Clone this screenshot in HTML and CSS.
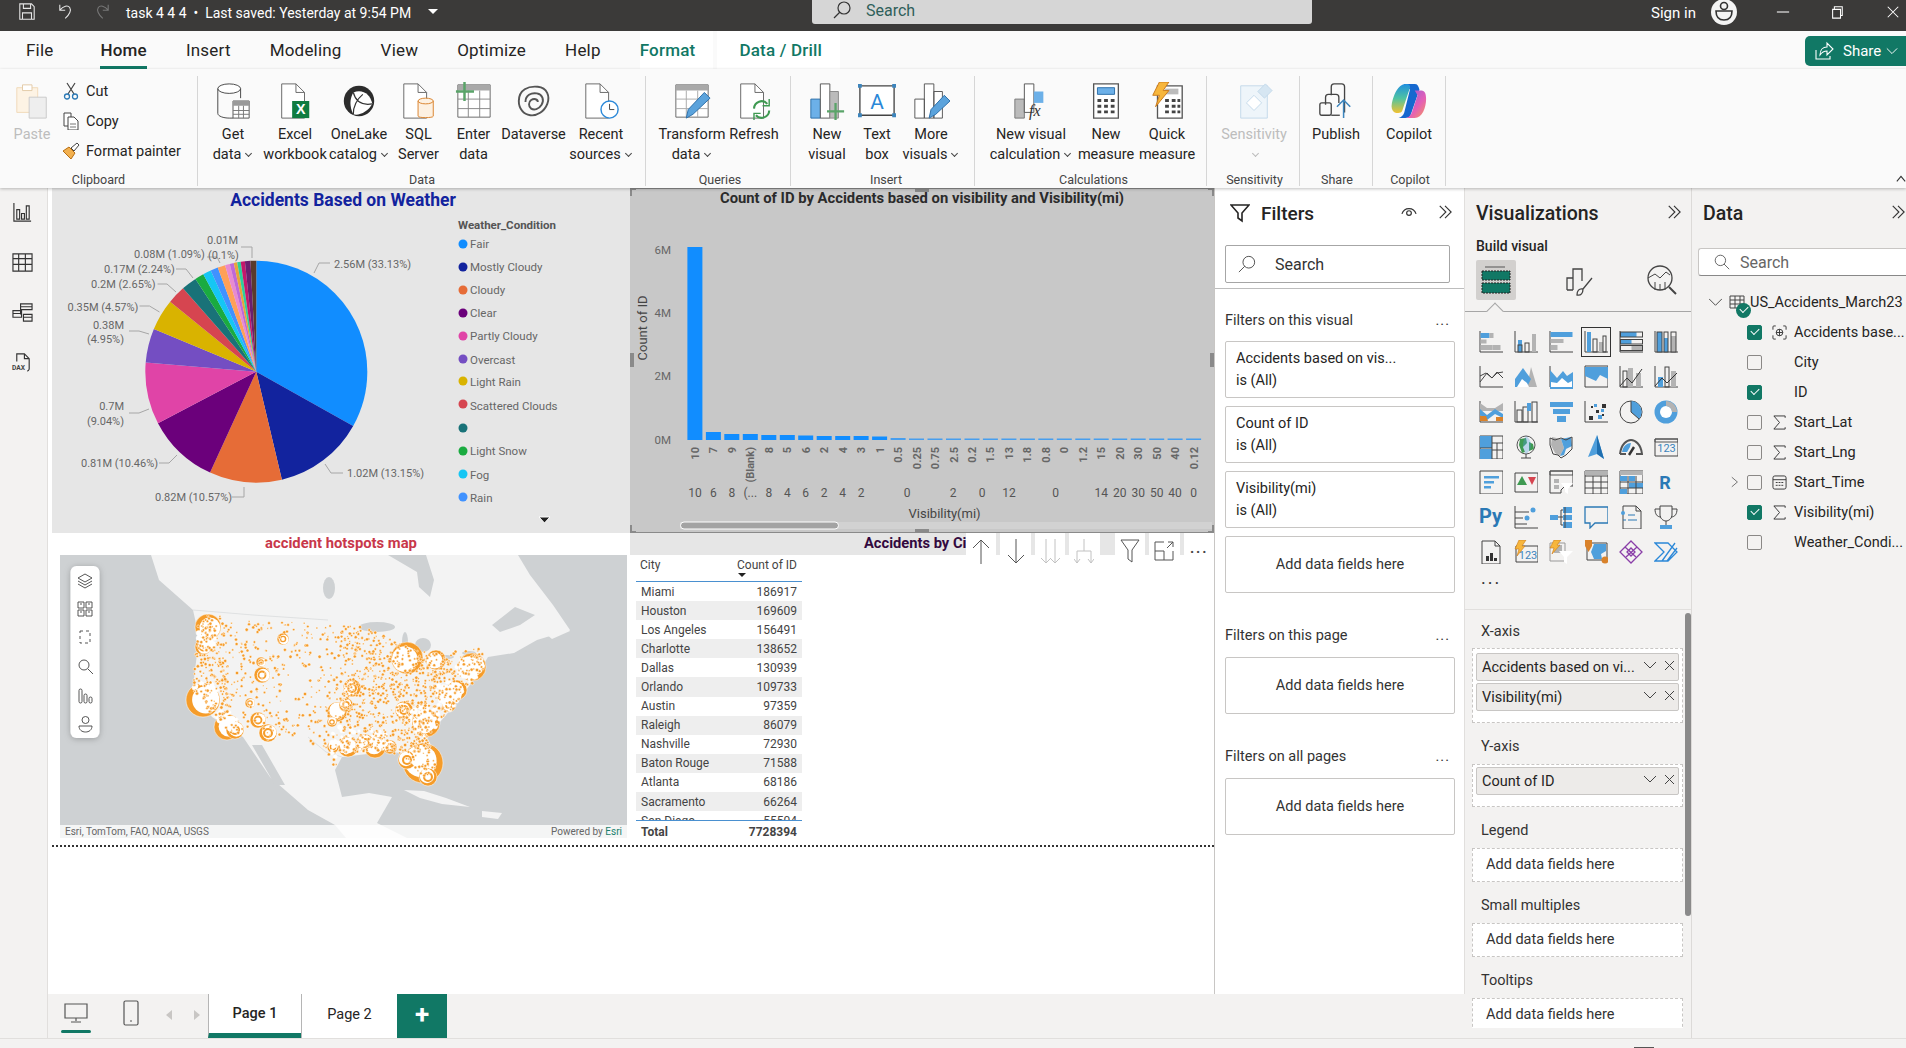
FILE: index.html
```html
<!DOCTYPE html>
<html lang="en">
<head>
    <meta charset="UTF-8">
    <title>task 4 4 4 - Power BI Desktop</title>
    <link rel="stylesheet" href="styles.css">
</head>
<body>
<div class="app">

    <!-- title bar -->
    <div class="titlebar">
        <svg class="tb-ico tb-save" viewBox="0 0 20 20"><path d="M2 1h13l3 3v14H2zM6 1v5h8V1M5 18v-7h10v7"/></svg>
        <svg class="tb-ico tb-undo" viewBox="0 0 20 20"><path d="M2 2v6h6M2 8c4-5 9-6 11-3s0 8-5 12"/></svg>
        <svg class="tb-ico tb-redo" viewBox="0 0 20 20"><path d="M18 2v6h-6M18 8c-4-5-9-6-11-3s0 8 5 12"/></svg>
        <span class="tb-file">task 4 4 4 &nbsp;•&nbsp; Last saved: Yesterday at 9:54 PM</span>
        <span class="tb-caret"></span>
        <div class="tb-search">
            <svg viewBox="0 0 20 20"><circle cx="12" cy="8" r="6"/><path d="M8 12l-6 6"/></svg>
            <span>Search</span>
        </div>
        <span class="tb-sign">Sign in</span>
        <svg class="tb-avatar" viewBox="0 0 26 26"><circle cx="13" cy="13" r="13" fill="#f4f4f4"/><circle cx="13" cy="7" r="3.5" fill="none" stroke="#333" stroke-width="1.6"/><path d="M5 12h16c0 6-3 9-8 9s-8-3-8-9z" fill="none" stroke="#333" stroke-width="1.6"/></svg>
        <svg class="tb-win tb-min" viewBox="0 0 16 16"><path d="M1 8h14"/></svg>
        <svg class="tb-win tb-res" viewBox="0 0 16 16"><path d="M3 5h9v10H3zM5 5V2h9v10h-2"/></svg>
        <svg class="tb-win tb-close" viewBox="0 0 16 16"><path d="M2 2l12 12M14 2L2 14"/></svg>
    </div>

    <!-- tabs -->
    <div class="tabs">
        <span class="tab tab-file">File</span>
        <span class="tab active">Home</span>
        <span class="tab">Insert</span>
        <span class="tab">Modeling</span>
        <span class="tab">View</span>
        <span class="tab">Optimize</span>
        <span class="tab">Help</span>
        <span class="tab ctx">Format</span>
        <span class="tab ctx">Data / Drill</span>
        <button class="share">
            <svg viewBox="0 0 20 20"><path d="M2 9v9h14v-3M6 14c0-5 3-8 7-8V2l6 6-6 6v-4c-3 0-5 1-7 4z"/></svg>
            Share
            <svg class="share-chev" viewBox="0 0 14 14"><path d="M1 4l6 6 6-6"/></svg>
        </button>
    </div>

    <!-- ribbon -->
    <div class="ribbon">
        <div class="rgroup g-clip">
            <div class="rbtns">
                <div class="rbtn dim paste">
                    <svg class="ric" viewBox="0 0 40 40"><path d="M4 6h22v26H4z" fill="#fdf3e4" stroke="#f0d9b8"/><path d="M10 3h10v6H10z" fill="#fff" stroke="#e3c9a6"/><path d="M17 16h18v22H17z" fill="#eee" stroke="#c9c9c9"/></svg>
                    <span>Paste</span>
                </div>
                <div class="clip-col">
                    <div class="clip-row"><svg viewBox="0 0 18 18"><path d="M5 1l7 11M13 1L6 12" fill="none" stroke="#444" stroke-width="1.2"/><circle cx="5" cy="14.500" r="2.500" fill="none" stroke="#2b79b5" stroke-width="1.3"/><circle cx="13" cy="14.500" r="2.500" fill="none" stroke="#2b79b5" stroke-width="1.3"/></svg>Cut</div>
                    <div class="clip-row"><svg viewBox="0 0 18 18"><path d="M2 1h7v13H2z" fill="#fff" stroke="#444"/><path d="M6 5h6l4 4v9H6z" fill="#fff" stroke="#444"/><path d="M8 12h6M8 15h6" stroke="#777"/></svg>Copy</div>
                    <div class="clip-row"><svg viewBox="0 0 18 18"><path d="M1 9l8 8 4-6-6-6z" fill="#f2b04f" stroke="#b76e12"/><path d="M9 6l6-5 2 2-5 6z" fill="#fff" stroke="#444"/></svg>Format painter</div>
                </div>
            </div>
            <div class="rlabel">Clipboard</div>
        </div>

        <div class="rgroup g-data">
            <div class="rbtns">
                <div class="rbtn w60">
                    <svg class="ric" viewBox="0 0 40 40"><ellipse cx="16" cy="7" rx="12" ry="5" fill="#fff" stroke="#444"/><path d="M4 7v26c0 3 6 5 12 5h4M28 7v10" fill="none" stroke="#444"/><path d="M20 20h17v18H20z" fill="#fff" stroke="#555"/><path d="M20 20h17v5H20z" fill="#9a9a9a"/><path d="M26 25v13M31 25v13M20 30h17M20 34h17" stroke="#777"/></svg>
                    <span>Get<br>data<i class="chev"></i></span>
                </div>
                <div class="rbtn w64">
                    <svg class="ric" viewBox="0 0 40 40"><path d="M6 2h15l9 9v27H6z" fill="#fff" stroke="#666"/><path d="M21 2v9h9" fill="none" stroke="#666"/><rect x="17" y="20" width="18" height="18" fill="#107c41"/><text x="26" y="34" class="xl">X</text></svg>
                    <span>Excel<br>workbook</span>
                </div>
                <div class="rbtn w64">
                    <svg class="ric" viewBox="0 0 40 40"><circle cx="20" cy="20" r="16" fill="#2c2c2c"/><path d="M14 11c10-4 18 2 20 12-4 8-14 13-20 11-4-8-4-16 0-23z" fill="#fff"/><path d="M14 11c2 8 8 14 20 12M14 34c0-8 4-16 10-21" fill="none" stroke="#333" stroke-width="1.3"/></svg>
                    <span>OneLake<br>catalog<i class="chev"></i></span>
                </div>
                <div class="rbtn w55">
                    <svg class="ric" viewBox="0 0 40 40"><path d="M4 2h15l9 9v27H4z" fill="#fff" stroke="#666"/><path d="M19 2v9h9" fill="none" stroke="#666"/><path d="M19 20v16c0 2 16 2 16 0V20" fill="#fdf1e2" stroke="#d9822b"/><ellipse cx="27" cy="20" rx="8" ry="3" fill="#fdf1e2" stroke="#d9822b"/></svg>
                    <span>SQL<br>Server</span>
                </div>
                <div class="rbtn w55">
                    <svg class="ric" viewBox="0 0 40 40"><path d="M3 3h34v34H3z" fill="#fff" stroke="#666"/><path d="M3 3h34v6H3z" fill="#a9a9a9"/><path d="M14 9v28M26 9v28M3 18h34M3 28h34" stroke="#888"/><path d="M10 0v20M1 10h19" stroke="#5aa469" stroke-width="2.600"/></svg>
                    <span>Enter<br>data</span>
                </div>
                <div class="rbtn w65">
                    <svg class="ric" viewBox="0 0 40 40"><path d="M4 20C4 8 14 4 24 5c10 1 13 10 10 18s-11 13-18 12C9 34 4 28 4 20z" fill="none" stroke="#555" stroke-width="2"/><path d="M11 21c0-7 6-10 12-9s8 7 5 12-8 6-11 4-3-7 0-9 7-1 7 2" fill="none" stroke="#555" stroke-width="2"/></svg>
                    <span>Dataverse</span>
                </div>
                <div class="rbtn w70">
                    <svg class="ric" viewBox="0 0 40 40"><path d="M4 2h15l9 9v27H4z" fill="#fff" stroke="#666"/><path d="M19 2v9h9" fill="none" stroke="#666"/><circle cx="29" cy="29" r="9" fill="#fff" stroke="#2b88d8" stroke-width="1.500"/><path d="M29 23v6h5" fill="none" stroke="#444"/></svg>
                    <span>Recent<br>sources<i class="chev"></i></span>
                </div>
            </div>
            <div class="rlabel">Data</div>
        </div>

        <div class="rgroup g-query">
            <div class="rbtns">
                <div class="rbtn w76">
                    <svg class="ric" viewBox="0 0 40 40"><path d="M3 3h34v34H3z" fill="#fff" stroke="#666"/><path d="M3 3h34v6H3z" fill="#a9a9a9"/><path d="M14 9v28M26 9v28M3 18h34M3 28h34" stroke="#aaa"/><path d="M14 38l2-9 17-18 6 6-18 17z" fill="#5ba3dc" stroke="#2b6ea8"/></svg>
                    <span>Transform<br>data<i class="chev"></i></span>
                </div>
                <div class="rbtn w48">
                    <svg class="ric" viewBox="0 0 40 40"><path d="M6 2h15l9 9v27H6z" fill="#fff" stroke="#666"/><path d="M21 2v9h9" fill="none" stroke="#666"/><path d="M20 28a8 8 0 0 1 14-5M36 30a8 8 0 0 1-14 5" fill="none" stroke="#3f9a52" stroke-width="2.200"/><path d="M36 18v7h-7M20 40v-7h7" fill="none" stroke="#3f9a52" stroke-width="1.500"/></svg>
                    <span>Refresh</span>
                </div>
            </div>
            <div class="rlabel">Queries</div>
        </div>

        <div class="rgroup g-insert">
            <div class="rbtns">
                <div class="rbtn w50">
                    <svg class="ric" viewBox="0 0 40 40"><path d="M3 18h10v20H3z" fill="#6cb0e8" stroke="#2b6ea8"/><path d="M13 2h10v36H13z" fill="#fff" stroke="#555"/><path d="M23 10h9v28h-9z" fill="#bbb" stroke="#888"/><path d="M29 22v18M20 31h18" stroke="#5aa469" stroke-width="2.400"/></svg>
                    <span>New<br>visual</span>
                </div>
                <div class="rbtn w50">
                    <svg class="ric" viewBox="0 0 40 40"><path d="M2 4h36v31H2z" fill="#fff" stroke="#444" stroke-width="1.400"/><text x="20" y="28" class="ta">A</text><path d="M0 2h4v4H0zM36 2h4v4h-4zM0 33h4v4H0zM36 33h4v4h-4z" fill="#3d85bd"/></svg>
                    <span>Text<br>box</span>
                </div>
                <div class="rbtn w58">
                    <svg class="ric" viewBox="0 0 40 40"><path d="M3 18h10v20H3zM13 2h10v36H13zM23 10h9v28h-9z" fill="#fff" stroke="#555"/><path d="M18 38l2-9 14-15 6 6-15 14z" fill="#5ba3dc" stroke="#2b6ea8"/></svg>
                    <span>More<br>visuals<i class="chev"></i></span>
                </div>
            </div>
            <div class="rlabel">Insert</div>
        </div>

        <div class="rgroup g-calc">
            <div class="rbtns">
                <div class="rbtn w92">
                    <svg class="ric" viewBox="0 0 40 40"><path d="M3 18h10v20H3z" fill="#bbb" stroke="#777"/><path d="M13 2h10v30H13z" fill="#fff" stroke="#555"/><path d="M23 10h10v12H23z" fill="#6cb0e8"/><text x="18" y="36" class="fx">fx</text></svg>
                    <span>New visual<br>calculation<i class="chev"></i></span>
                </div>
                <div class="rbtn w58">
                    <svg class="ric" viewBox="0 0 40 40"><path d="M7 2h26v36H7z" fill="#fff" stroke="#555" stroke-width="1.400"/><path d="M11 6h18v7H11z" fill="#6cb0e8" stroke="#2b6ea8"/><path d="M11 18h4v3h-4zM18 18h4v3h-4zM25 18h4v3h-4zM11 24h4v3h-4zM18 24h4v3h-4zM25 24h4v3h-4zM11 30h4v3h-4zM18 30h4v3h-4zM25 30h4v3h-4z" fill="#444"/></svg>
                    <span>New<br>measure</span>
                </div>
                <div class="rbtn w64">
                    <svg class="ric" viewBox="0 0 40 40"><path d="M10 4h26v34H10z" fill="#fff" stroke="#555" stroke-width="1.400"/><path d="M18 7h14v6H18z" fill="#bbb"/><path d="M18 18h4v3h-4zM25 18h4v3h-4zM18 24h4v3h-4zM25 24h4v3h-4zM18 30h4v3h-4zM25 30h4v3h-4zM31 18h3v3h-3zM31 24h3v3h-3zM31 30h3v3h-3z" fill="#444"/><path d="M12 0h10l-6 9h6L8 26l4-12H5z" fill="#f7b63c" stroke="#c9781a"/></svg>
                    <span>Quick<br>measure</span>
                </div>
            </div>
            <div class="rlabel">Calculations</div>
        </div>

        <div class="rgroup g-sens">
            <div class="rbtns">
                <div class="rbtn w80 dim">
                    <svg class="ric" viewBox="0 0 40 40"><path d="M6 4h28v34H6z" fill="#eef5fa" stroke="#c3d9ea"/><path d="M12 22l8-8 8 8-8 8z" fill="#fff" stroke="#c3d9ea"/><path d="M24 10l8-8 7 7-8 8z" fill="#d6e6f2" stroke="#c3d9ea"/></svg>
                    <span>Sensitivity<br><i class="chev"></i></span>
                </div>
            </div>
            <div class="rlabel">Sensitivity</div>
        </div>

        <div class="rgroup g-share">
            <div class="rbtns">
                <div class="rbtn w60">
                    <svg class="ric" viewBox="0 0 40 40"><path d="M15 14V5a3 3 0 0 1 3-3h8a3 3 0 0 1 3 3v27" fill="none" stroke="#444" stroke-width="1.400"/><path d="M9 24v-8a3 3 0 0 1 3-3h8a3 3 0 0 1 3 3v6" fill="none" stroke="#444" stroke-width="1.400"/><rect x="3" y="22" width="12" height="13" rx="2" fill="none" stroke="#444" stroke-width="1.400"/><path d="M15 35h9" stroke="#444" stroke-width="1.400"/><path d="M28 38V19M21 26l7-7 7 7" fill="none" stroke="#3d85bd" stroke-width="1.600"/></svg>
                    <span>Publish</span>
                </div>
            </div>
            <div class="rlabel">Share</div>
        </div>

        <div class="rgroup g-copilot">
            <div class="rbtns">
                <div class="rbtn w60">
                    <svg class="ric" viewBox="0 0 40 40">
                        <defs>
                            <linearGradient id="cpa" x1="0" y1="0" x2="0" y2="1"><stop offset="0" stop-color="#1f8fe0"/><stop offset=".5" stop-color="#4fc3a1"/><stop offset="1" stop-color="#f2c230"/></linearGradient>
                            <linearGradient id="cpb" x1="0" y1="0" x2="1" y2="1"><stop offset="0" stop-color="#8a5ce0"/><stop offset=".6" stop-color="#e45fb6"/><stop offset="1" stop-color="#f59a5a"/></linearGradient>
                        </defs>
                        <path d="M14 2h12c3 0 4 2 5 6l-9 26c-1 3-3 4-6 4H9c3-1 5-3 6-6l6-24z" fill="#1668cf"/>
                        <path d="M13 3c4-2 9-1 8 3l-8 24c-1 3-5 3-8 2-3-2-4-5-3-10 2-8 5-16 11-19z" fill="url(#cpa)"/>
                        <path d="M26 9h7c4 0 5 4 5 9 0 9-4 20-12 20H15c4 0 7-3 8-6l6-18z" fill="url(#cpb)"/>
                    </svg>
                    <span>Copilot</span>
                </div>
            </div>
            <div class="rlabel">Copilot</div>
        </div>
        <svg class="rib-collapse" viewBox="0 0 12 12"><path d="M1 10l5-6 5 6"/></svg>
    </div>

    <div class="main">
        <!-- left rail -->
        <div class="rail">
            <svg viewBox="0 0 22 22"><path d="M2 1v19h18M5 8h3v10H5zM10 12h3v6h-3zM15 4h3v14h-3z"/></svg>
            <svg viewBox="0 0 22 22"><path d="M1 2h20v18H1zM1 7h20M1 13h20M7 2v18M14 2v18"/></svg>
            <svg viewBox="0 0 22 22"><path d="M9 2h12v6H9zM9 8v5M1 9h9v7H1zM12 13h9v7h-9zM1 12h9M12 16h9M9 5h12"/></svg>
            <svg viewBox="0 0 22 22"><path d="M5 10V2h8l5 5v11a3 3 0 0 1-2 2M13 2v5h5"/><text x="0" y="19" class="dax">DAX</text></svg>
        </div>

        <div class="center">
            <div class="center-top">
                <!-- report canvas -->
                <div class="canvas">
                    <div class="report">

                        <!-- pie -->
                        <svg class="visual" viewBox="52 188 578 345">
                            <rect x="52" y="188" width="578" height="345" fill="#e6e6e6"/>
                            <text x="343" y="206" text-anchor="middle" class="v-title" fill="#12239e">Accidents Based on Weather</text>
                            <g class="pie">
                                <circle cx="256.300" cy="371.700" r="55.500" pathLength="100" stroke="#118dff" stroke-dasharray="33.13 100" transform="rotate(-90 256.300 371.700)"/>
                                <circle cx="256.300" cy="371.700" r="55.500" pathLength="100" stroke="#12239e" stroke-dasharray="13.15 100" stroke-dashoffset="-33.13" transform="rotate(-90 256.300 371.700)"/>
                                <circle cx="256.300" cy="371.700" r="55.500" pathLength="100" stroke="#e66c37" stroke-dasharray="10.57 100" stroke-dashoffset="-46.28" transform="rotate(-90 256.300 371.700)"/>
                                <circle cx="256.300" cy="371.700" r="55.500" pathLength="100" stroke="#6b007b" stroke-dasharray="10.46 100" stroke-dashoffset="-56.85" transform="rotate(-90 256.300 371.700)"/>
                                <circle cx="256.300" cy="371.700" r="55.500" pathLength="100" stroke="#e044a7" stroke-dasharray="9.04 100" stroke-dashoffset="-67.31" transform="rotate(-90 256.300 371.700)"/>
                                <circle cx="256.300" cy="371.700" r="55.500" pathLength="100" stroke="#744ec2" stroke-dasharray="4.95 100" stroke-dashoffset="-76.35" transform="rotate(-90 256.300 371.700)"/>
                                <circle cx="256.300" cy="371.700" r="55.500" pathLength="100" stroke="#d9b300" stroke-dasharray="4.57 100" stroke-dashoffset="-81.30" transform="rotate(-90 256.300 371.700)"/>
                                <circle cx="256.300" cy="371.700" r="55.500" pathLength="100" stroke="#d64550" stroke-dasharray="2.65 100" stroke-dashoffset="-85.87" transform="rotate(-90 256.300 371.700)"/>
                                <circle cx="256.300" cy="371.700" r="55.500" pathLength="100" stroke="#197278" stroke-dasharray="2.24 100" stroke-dashoffset="-88.52" transform="rotate(-90 256.300 371.700)"/>
                                <circle cx="256.300" cy="371.700" r="55.500" pathLength="100" stroke="#1aab40" stroke-dasharray="1.30 100" stroke-dashoffset="-90.76" transform="rotate(-90 256.300 371.700)"/>
                                <circle cx="256.300" cy="371.700" r="55.500" pathLength="100" stroke="#15c6f4" stroke-dasharray="1.20 100" stroke-dashoffset="-92.06" transform="rotate(-90 256.300 371.700)"/>
                                <circle cx="256.300" cy="371.700" r="55.500" pathLength="100" stroke="#4092ff" stroke-dasharray="1.09 100" stroke-dashoffset="-93.26" transform="rotate(-90 256.300 371.700)"/>
                                <circle cx="256.300" cy="371.700" r="55.500" pathLength="100" stroke="#ffa058" stroke-dasharray="1.09 100" stroke-dashoffset="-94.35" transform="rotate(-90 256.300 371.700)"/>
                                <circle cx="256.300" cy="371.700" r="55.500" pathLength="100" stroke="#e88ad0" stroke-dasharray="0.70 100" stroke-dashoffset="-95.44" transform="rotate(-90 256.300 371.700)"/>
                                <circle cx="256.300" cy="371.700" r="55.500" pathLength="100" stroke="#bf68d8" stroke-dasharray="0.60 100" stroke-dashoffset="-96.14" transform="rotate(-90 256.300 371.700)"/>
                                <circle cx="256.300" cy="371.700" r="55.500" pathLength="100" stroke="#e8a33a" stroke-dasharray="0.50 100" stroke-dashoffset="-96.74" transform="rotate(-90 256.300 371.700)"/>
                                <circle cx="256.300" cy="371.700" r="55.500" pathLength="100" stroke="#2ecf9a" stroke-dasharray="0.50 100" stroke-dashoffset="-97.24" transform="rotate(-90 256.300 371.700)"/>
                                <circle cx="256.300" cy="371.700" r="55.500" pathLength="100" stroke="#c4186c" stroke-dasharray="0.60 100" stroke-dashoffset="-97.74" transform="rotate(-90 256.300 371.700)"/>
                                <circle cx="256.300" cy="371.700" r="55.500" pathLength="100" stroke="#6b1f6f" stroke-dasharray="0.80 100" stroke-dashoffset="-98.34" transform="rotate(-90 256.300 371.700)"/>
                                <circle cx="256.300" cy="371.700" r="55.500" pathLength="100" stroke="#5a3a2c" stroke-dasharray="0.86 100" stroke-dashoffset="-99.14" transform="rotate(-90 256.300 371.700)"/>
                            </g>
                            <g class="lead">
                                <path d="M314 273l5-10h11M325 464l6 9h12M244 487v10h-12M177 455l-8 8h-10M149 409l-10 4h-10M149 334l-10-3h-10M159.500 312l-10-6h-10M176 292l-9-8h-9.500M193 278l-7-9h-10M220 263l-3-6h-10M252 258v-11h-11"/>
                            </g>
                            <g class="pl">
                                <text x="334" y="268">2.56M (33.13%)</text>
                                <text x="347" y="477">1.02M (13.15%)</text>
                                <text x="155" y="501">0.82M (10.57%)</text>
                                <text x="81" y="467">0.81M (10.46%)</text>
                                <text x="124" y="410" text-anchor="end">0.7M</text>
                                <text x="124" y="425" text-anchor="end">(9.04%)</text>
                                <text x="124" y="329" text-anchor="end">0.38M</text>
                                <text x="124" y="343" text-anchor="end">(4.95%)</text>
                                <text x="67.500" y="311">0.35M (4.57%)</text>
                                <text x="91" y="288">0.2M (2.65%)</text>
                                <text x="104" y="273">0.17M (2.24%)</text>
                                <text x="134" y="258">0.08M (1.09%)</text>
                                <text x="207" y="244">0.01M</text>
                                <text x="208" y="259">(0.1%)</text>
                            </g>
                            <text x="458" y="229" class="leg-title">Weather_Condition</text>
                            <g class="leg">
                                <circle cx="463" cy="244" r="4.500" fill="#118dff"/><text x="470" y="248">Fair</text>
                                <circle cx="463" cy="267" r="4.500" fill="#12239e"/><text x="470" y="271">Mostly Cloudy</text>
                                <circle cx="463" cy="290" r="4.500" fill="#e66c37"/><text x="470" y="294">Cloudy</text>
                                <circle cx="463" cy="313" r="4.500" fill="#6b007b"/><text x="470" y="317">Clear</text>
                                <circle cx="463" cy="336" r="4.500" fill="#e044a7"/><text x="470" y="340">Partly Cloudy</text>
                                <circle cx="463" cy="359" r="4.500" fill="#744ec2"/><text x="470" y="364">Overcast</text>
                                <circle cx="463" cy="381" r="4.500" fill="#d9b300"/><text x="470" y="386">Light Rain</text>
                                <circle cx="463" cy="404" r="4.500" fill="#d64550"/><text x="470" y="410">Scattered Clouds</text>
                                <circle cx="463" cy="428" r="4.500" fill="#197278"/>
                                <circle cx="463" cy="451" r="4.500" fill="#1aab40"/><text x="470" y="455">Light Snow</text>
                                <circle cx="463" cy="474" r="4.500" fill="#15c6f4"/><text x="470" y="479">Fog</text>
                                <circle cx="463" cy="497" r="4.500" fill="#4092ff"/><text x="470" y="502">Rain</text>
                            </g>
                            <path d="M539 517h11l-5.500 6z" fill="#222" stroke="#fff"/>
                        </svg>

                        <!-- columns -->
                        <svg class="visual" viewBox="630 188 584 345">
                            <rect x="630" y="188" width="584" height="345" fill="#c8c8c8"/>
                            <text x="922" y="203" text-anchor="middle" class="bar-title">Count of ID by Accidents based on visibility and Visibility(mi)</text>
                            <g class="ytick">
                                <text x="671" y="254">6M</text><text x="671" y="317">4M</text><text x="671" y="380">2M</text><text x="671" y="444">0M</text>
                            </g>
                            <text transform="translate(647,328) rotate(-90)" text-anchor="middle" class="y-name">Count of ID</text>
                            <g fill="#118dff">
                                <rect x="687.400" y="247" width="15" height="193"/><rect x="705.900" y="432" width="15" height="8"/><rect x="724.300" y="434" width="15" height="6"/><rect x="742.800" y="434" width="15" height="6"/><rect x="761.300" y="435" width="15" height="5"/><rect x="779.800" y="435" width="15" height="5"/><rect x="798.200" y="435.500" width="15" height="4.500"/><rect x="816.700" y="436" width="15" height="4"/><rect x="835.200" y="436" width="15" height="4"/><rect x="853.600" y="436" width="15" height="4"/><rect x="872.100" y="436.500" width="15" height="3.500"/>
                            </g>
                            <g fill="#118dff" opacity=".7">
                                <rect x="890.600" y="438" width="15" height="2"/><rect x="909" y="438.500" width="15" height="1.500"/><rect x="927.500" y="438.500" width="15" height="1.500"/><rect x="946" y="438.500" width="15" height="1.500"/><rect x="964.500" y="438.500" width="15" height="1.500"/><rect x="982.900" y="438.500" width="15" height="1.500"/><rect x="1001.400" y="438.500" width="15" height="1.500"/><rect x="1019.900" y="438.500" width="15" height="1.500"/><rect x="1038.300" y="438.500" width="15" height="1.500"/><rect x="1056.800" y="438.500" width="15" height="1.500"/><rect x="1075.300" y="438.500" width="15" height="1.500"/><rect x="1093.700" y="438.500" width="15" height="1.500"/><rect x="1112.200" y="438.500" width="15" height="1.500"/><rect x="1130.700" y="438.500" width="15" height="1.500"/><rect x="1149.200" y="438.500" width="15" height="1.500"/><rect x="1167.600" y="438.500" width="15" height="1.500"/><rect x="1186.100" y="438.500" width="15" height="1.500"/>
                            </g>
                            <g class="xrot" text-anchor="end">
                                <text transform="translate(699,447) rotate(-90)">10</text><text transform="translate(717.400,447) rotate(-90)">7</text><text transform="translate(735.800,447) rotate(-90)">9</text><text transform="translate(754.300,447) rotate(-90)">(Blank)</text><text transform="translate(772.800,447) rotate(-90)">8</text><text transform="translate(791.300,447) rotate(-90)">5</text><text transform="translate(809.700,447) rotate(-90)">6</text><text transform="translate(828.200,447) rotate(-90)">2</text><text transform="translate(846.700,447) rotate(-90)">4</text><text transform="translate(865.100,447) rotate(-90)">3</text><text transform="translate(883.600,447) rotate(-90)">1</text><text transform="translate(902.100,447) rotate(-90)">0.5</text><text transform="translate(920.500,447) rotate(-90)">0.25</text><text transform="translate(939,447) rotate(-90)">0.75</text><text transform="translate(957.500,447) rotate(-90)">2.5</text><text transform="translate(976,447) rotate(-90)">0.2</text><text transform="translate(994.400,447) rotate(-90)">1.5</text><text transform="translate(1012.900,447) rotate(-90)">13</text><text transform="translate(1031.400,447) rotate(-90)">1.8</text><text transform="translate(1049.800,447) rotate(-90)">0.8</text><text transform="translate(1068.300,447) rotate(-90)">0</text><text transform="translate(1086.800,447) rotate(-90)">1.2</text><text transform="translate(1105.200,447) rotate(-90)">15</text><text transform="translate(1123.700,447) rotate(-90)">20</text><text transform="translate(1142.200,447) rotate(-90)">30</text><text transform="translate(1160.700,447) rotate(-90)">50</text><text transform="translate(1179.100,447) rotate(-90)">40</text><text transform="translate(1197.600,447) rotate(-90)">0.12</text>
                            </g>
                            <g class="xlow" text-anchor="middle">
                                <text x="695" y="497">10</text><text x="713.400" y="497">6</text><text x="731.800" y="497">8</text><text x="750.300" y="497">(...</text><text x="768.800" y="497">8</text><text x="787.300" y="497">4</text><text x="805.700" y="497">6</text><text x="824.200" y="497">2</text><text x="842.700" y="497">4</text><text x="861.100" y="497">2</text><text x="907" y="497">0</text><text x="953" y="497">2</text><text x="982" y="497">0</text><text x="1009" y="497">12</text><text x="1055.500" y="497">0</text><text x="1101.200" y="497">14</text><text x="1119.700" y="497">20</text><text x="1138.200" y="497">30</text><text x="1156.700" y="497">50</text><text x="1175.100" y="497">40</text><text x="1193.600" y="497">0</text>
                            </g>
                            <text x="944.600" y="518" text-anchor="middle" class="x-name">Visibility(mi)</text>
                            <rect x="680" y="522" width="532" height="7" fill="#d2d2d2"/>
                            <rect x="680.500" y="522" width="158" height="7" rx="3.500" fill="#a3a3a3" stroke="#fff"/>
                            <!-- selection handles -->
                            <path d="M630.500 195v-6.500h584v6M630.500 526v6.500h584v-6" fill="none" stroke="#8a8a8a"/>
                            <path d="M630 188h6v2h-4v6h-2zM1208 188h6v8h-2v-6h-4zM630 525h2v6h4v2h-6zM1212 525h2v8h-6v-2h4zM915 188h14v4h-14zM915 529h14v4h-14zM630 353h4v14h-4zM1210 353h4v14h-4z" fill="#8a8a8a"/>
                        </svg>

                        <!-- map -->
                        <div class="map-visual">
                            <div class="map-title">accident hotspots map</div>
                            <svg id="map" class="map-svg" viewBox="60 555 567 283">
                                <rect x="60" y="555" width="567" height="283" fill="#ced1d3"/>
                                <path class="land" d="M151 555L159 580 193 610 199 637 193 687 212 717 243 737 270 777 308 810 335 825 346 838 407 838 377 823 392 797 369 793 342 797 335 770 342 757 384 752 404 753 419 780 430 782 438 760 427 737 453 707 476 677 488 657 514 653 537 640 570 630 553 605 530 575 518 555Z"/>
                                <path class="water" d="M388 555l29 17 2 15 11 10 4-17-8-25zM492 625l23-18 20 8-15 10-20 7zM252 745h10l23 40h-10z"/>
                                <ellipse class="water" cx="329" cy="588" rx="6" ry="11"/>
                                <ellipse class="water" cx="377" cy="627" rx="18" ry="5"/>
                                <ellipse class="water" cx="405" cy="642" rx="3" ry="10"/>
                                <ellipse class="water" cx="423" cy="645" rx="8" ry="7"/>
                                <ellipse class="water" cx="446" cy="657" rx="8" ry="2"/>
                                <ellipse class="water" cx="469" cy="653" rx="7" ry="2"/>
                                <path class="land" d="M404 790l20 1 22 7 24 9-28-3-22-6zM482 811l20 2-4 6-16-2zM546 634l20-8 4 5-18 8z"/>
                                <path class="roads" d="M193 610l60 5 75 5M342 757l-16-5-18-15"/>
                                <g id="bubbles"></g>
                                <rect x="60" y="825" width="567" height="13" fill="#fff" opacity=".78"/>
                                <text x="65" y="835" class="attr">Esri, TomTom, FAO, NOAA, USGS</text>
                                <text x="622" y="835" text-anchor="end" class="attr">Powered by <tspan fill="#1b7f6d">Esri</tspan></text>
                                <g class="map-tools">
                                    <rect x="70.500" y="566" width="29" height="172" rx="6" fill="#fff" filter="url(#toolshadow)"/>
                                    <path d="M85 574l7 4-7 4-7-4zM78 581l7 4 7-4M78 584l7 4 7-4"/>
                                    <path d="M78 602h6v6h-6zM86 602h6v6h-6zM78 610h6v6h-6zM86 610h6v6h-6zM80 604h2M88 604h2M80 612h2M88 612h2"/>
                                    <path d="M80 631h10v12H80z" stroke-dasharray="3 3"/>
                                    <circle cx="84" cy="665" r="5"/><path d="M88 669l5 5"/>
                                    <rect x="79" y="689" width="3" height="14" rx="1.500"/><rect x="84" y="694" width="3" height="9" rx="1.500"/><rect x="89" y="697" width="3" height="6" rx="1.500"/>
                                    <circle cx="85.500" cy="720" r="3.500"/><path d="M79 726h13c0 4-3 6-6.500 6S79 730 79 726z"/>
                                </g>
                                <defs><filter id="toolshadow" x="-40%" y="-10%" width="180%" height="120%"><feDropShadow dx="0" dy="1" stdDeviation="3" flood-opacity=".25"/></filter></defs>
                            </svg>
                        </div>

                        <!-- table -->
                        <div class="table-visual">
                            <div class="table-title">Accidents by Ci</div>
                            <div class="vis-head">
                                <div class="vh-btn"><svg viewBox="0 0 20 28"><path d="M10 27V3M2 11l8-8 8 8"/></svg></div>
                                <div class="vh-btn"><svg viewBox="0 0 20 28"><path d="M10 2v24M2 18l8 8 8-8"/></svg></div>
                                <div class="vh-btn off"><svg viewBox="0 0 20 28"><path d="M6 2v24M1 21l5 5 5-5M15 2v24M10 21l5 5 5-5"/></svg></div>
                                <div class="vh-btn off"><svg viewBox="0 0 20 28"><path d="M10 2v12M3 14h14M3 14v12M17 14v12M0 22l3 4 3-4M14 22l3 4 3-4"/></svg></div>
                                <div class="vh-btn"><svg viewBox="0 0 20 28"><path d="M1 3h18l-7 10v12l-4-3v-9z"/></svg></div>
                                <div class="vh-btn"><svg viewBox="0 0 20 28"><path d="M10 5H1v18h18v-9M1 14h9v9M13 11l6-6M14 5h5v5"/></svg></div>
                                <div class="vh-btn dots">···</div>
                            </div>
                            <div class="tbl">
                                <div class="thead"><span>City</span><span class="th-num">Count of ID<i class="sort"></i></span></div>
                                <div class="tbody">
                                    <div class="trow"><span>Miami</span><span>186917</span></div>
                                    <div class="trow"><span>Houston</span><span>169609</span></div>
                                    <div class="trow"><span>Los Angeles</span><span>156491</span></div>
                                    <div class="trow"><span>Charlotte</span><span>138652</span></div>
                                    <div class="trow"><span>Dallas</span><span>130939</span></div>
                                    <div class="trow"><span>Orlando</span><span>109733</span></div>
                                    <div class="trow"><span>Austin</span><span>97359</span></div>
                                    <div class="trow"><span>Raleigh</span><span>86079</span></div>
                                    <div class="trow"><span>Nashville</span><span>72930</span></div>
                                    <div class="trow"><span>Baton Rouge</span><span>71588</span></div>
                                    <div class="trow"><span>Atlanta</span><span>68186</span></div>
                                    <div class="trow"><span>Sacramento</span><span>66264</span></div>
                                    <div class="trow"><span>San Diego</span><span>55504</span></div>
                                </div>
                                <div class="ttotal"><span>Total</span><span>7728394</span></div>
                            </div>
                        </div>
                    </div>
                </div>

                <!-- filters -->
                <div class="filters">
                    <div class="pane-head f-head">
                        <svg class="f-funnel" viewBox="0 0 20 20"><path d="M1 2h18l-7 8v8l-4-3v-5z"/></svg>
                        <span class="f-title">Filters</span>
                        <svg class="f-eye" viewBox="0 0 20 14"><path d="M1 10c3-9 15-9 18 0"/><circle cx="10" cy="9" r="3"/></svg>
                        <svg class="dbl" viewBox="0 0 16 16"><path d="M2 1l7 7-7 7M8 1l7 7-7 7"/></svg>
                    </div>
                    <div class="f-search">
                        <svg viewBox="0 0 20 20"><circle cx="12" cy="8" r="6.500"/><path d="M7.500 12.500L1 19"/></svg>
                        <span>Search</span>
                    </div>
                    <div class="f-sep"></div>
                    <div class="f-sec first"><span>Filters on this visual</span><b>...</b></div>
                    <div class="f-card"><span>Accidents based on vis...</span><span>is (All)</span></div>
                    <div class="f-card"><span>Count of ID</span><span>is (All)</span></div>
                    <div class="f-card"><span>Visibility(mi)</span><span>is (All)</span></div>
                    <div class="f-card add">Add data fields here</div>
                    <div class="f-sec"><span>Filters on this page</span><b>...</b></div>
                    <div class="f-card add">Add data fields here</div>
                    <div class="f-sec"><span>Filters on all pages</span><b>...</b></div>
                    <div class="f-card add">Add data fields here</div>
                </div>
            </div>

            <!-- page tabs -->
            <div class="pagebar">
                <div class="pb-view on"><svg viewBox="0 0 24 20"><path d="M1 1h22v14H1zM12 15v3M7 19h10"/></svg></div>
                <div class="pb-view phone"><svg viewBox="0 0 16 26"><rect x="1" y="1" width="14" height="24" rx="1.500"/><path d="M7 21h2"/></svg></div>
                <span class="pb-arrow left"></span>
                <span class="pb-arrow right"></span>
                <div class="page-tab on">Page 1</div>
                <div class="page-tab">Page 2</div>
                <div class="page-add">+</div>
            </div>
        </div>

        <!-- visualizations -->
        <div class="viz">
            <div class="pane-head">
                <span class="p-title">Visualizations</span>
                <svg class="dbl" viewBox="0 0 16 16"><path d="M2 1l7 7-7 7M8 1l7 7-7 7"/></svg>
            </div>
            <div class="build-label">Build visual</div>
            <div class="build-tabs">
                <div class="bt on"><svg viewBox="0 0 32 32"><path d="M5 3h20" stroke="#555"/><rect x="2" y="7" width="28" height="9" fill="#117865" stroke="#222" stroke-dasharray="2 1"/><rect x="2" y="19" width="28" height="10" fill="#117865" stroke="#222" stroke-dasharray="2 1"/></svg></div>
                <div class="bt"><svg viewBox="0 0 32 32"><path d="M4 26V14h6V5h9v8M4 26h6M10 14v12M19 13v4" fill="none" stroke="#444" stroke-width="1.300"/><path d="M14 31c0-4 2-7 6-6 0 4-2 7-6 6zM20 25l9-11" fill="none" stroke="#444" stroke-width="1.300"/></svg></div>
                <div class="bt"><svg viewBox="0 0 32 32"><circle cx="14" cy="14" r="12" fill="none" stroke="#444" stroke-width="1.300"/><path d="M2 14l7-4 5 4 6-6 4 3M9 26v-8M14 26v-6M19 26v-8" fill="none" stroke="#444"/><path d="M23 23l7 7" stroke="#444" stroke-width="2"/></svg></div>
            </div>
            <div class="build-sep"></div>
            <div class="viz-grid">
                <svg viewBox="0 0 24 24"><path d="M1 1v21h23"/><rect class="b" x="1.500" y="3" width="9" height="5"/><rect class="g" x="10.500" y="3" width="4" height="5"/><rect class="g" x="1.500" y="9.500" width="6" height="4"/><rect class="g" x="1.500" y="15" width="12" height="5"/><rect class="g" x="13.500" y="15" width="8" height="5"/></svg>
                <svg viewBox="0 0 24 24"><path d="M1 22V1M1 22h23"/><rect class="b" x="4" y="10" width="4" height="12"/><rect class="k" x="4" y="15" width="4" height="7"/><rect class="k" x="11" y="13" width="4" height="9"/><rect class="g" x="18" y="4" width="4" height="18"/></svg>
                <svg viewBox="0 0 24 24"><path d="M1 1v21h23"/><rect class="b" x="1.500" y="2" width="22" height="5"/><rect class="g" x="1.500" y="9" width="13" height="4"/><rect class="g" x="1.500" y="15" width="7" height="5"/></svg>
                <div class="cell-on"><svg viewBox="0 0 24 24"><path d="M1 22V1M1 22h23"/><rect class="b" x="3" y="2" width="4" height="20"/><rect class="k" x="9" y="9" width="4" height="13"/><rect class="g" x="15" y="12" width="4" height="10"/><rect class="k" x="19" y="6" width="3" height="16"/></svg></div>
                <svg viewBox="0 0 24 24"><path d="M1 1v21h23"/><rect class="b" x="1.500" y="2" width="16" height="5"/><rect class="k" x="1.500" y="2" width="22" height="5"/><rect class="b" x="1.500" y="9.500" width="11" height="4.500"/><rect class="k" x="1.500" y="9.500" width="22" height="4.500"/><rect class="g" x="12.500" y="15.500" width="11" height="5"/><rect class="k" x="1.500" y="15.500" width="22" height="5"/></svg>
                <svg viewBox="0 0 24 24"><path d="M1 22V1M1 22h23"/><rect class="b" x="3" y="2" width="5" height="20"/><rect class="k" x="3" y="2" width="5" height="20"/><rect class="b" x="10" y="8" width="4" height="14"/><rect class="k" x="10" y="2" width="4" height="20"/><rect class="g" x="17" y="6" width="5" height="16"/><rect class="k" x="17" y="2" width="5" height="20"/></svg>

                <svg viewBox="0 0 24 24"><path d="M1 1v21h23M1 17l7-9 5 5 5-6 6 6M1 11l6-3 6 5 5-5 6-1"/></svg>
                <svg viewBox="0 0 24 24"><path class="g" d="M13 22L17 2l6 20z"/><path class="b" d="M1 22V14L9 3l8 11-4 8z"/><path class="w" d="M3 22l5-8 5 4 2 4z"/></svg>
                <svg viewBox="0 0 24 24"><path d="M1 1v21h23"/><path class="b" d="M1 5l7 8 6-7 4 5 6-4v17H1z"/><path class="w" d="M2 22v-5l6 1 5-5 6 5 4-2v6z"/></svg>
                <svg viewBox="0 0 24 24"><path d="M1 1h23v21H1z"/><path class="b" d="M1 2h23v12l-8-4-4 6-11-5z"/></svg>
                <svg viewBox="0 0 24 24"><path d="M1 1v21h23"/><rect class="g" x="9" y="3" width="5" height="19"/><rect class="g" x="17" y="8" width="5" height="14"/><rect class="k" x="4" y="6" width="4" height="16"/><path d="M1 21l7-8 5 5 10-14" stroke="#333"/></svg>
                <svg viewBox="0 0 24 24"><path d="M1 1v21h23"/><rect class="b" x="4" y="12" width="5" height="10"/><rect class="k" x="11" y="2" width="4" height="20"/><rect class="g" x="17" y="6" width="5" height="16"/><path d="M1 21l7-8 5 5 10-10" stroke="#333"/></svg>

                <svg viewBox="0 0 24 24"><path d="M1 1v21h23"/><path class="g" d="M1 3l7 5 8 0 8-5v8H1z"/><path class="b" d="M1 9l7 6 8-6 8 5v4l-8-4-8 6-7-5z"/><path class="o" d="M1 16h6l2 5H1zM17 17h7v4h-7z"/></svg>
                <svg viewBox="0 0 24 24"><path d="M1 1v21h23"/><rect class="k" x="3" y="10" width="5" height="12"/><rect class="k" x="9" y="7" width="5" height="15"/><rect class="b" x="13" y="3" width="4" height="8"/><rect class="k" x="18" y="2" width="5" height="20"/></svg>
                <svg viewBox="0 0 24 24"><path class="b" d="M1 2h23v5H1zM4 9h17v5H4zM8 16h9v6H8z"/></svg>
                <svg viewBox="0 0 24 24"><path d="M1 1v21h23"/><path class="x" d="M5 16h4v4H5zM12 10h3v3h-3zM18 4h4v4h-4zM18 14h2v2h-2zM7 6h2v2H7z"/><path class="b" d="M10 4h3v3h-3zM14 15h4v4h-4zM17 9h3v3h-3z"/></svg>
                <svg viewBox="0 0 24 24"><circle cx="12" cy="12" r="11"/><path class="b" d="M12 12V1a11 11 0 0 1 8 18z"/><path d="M12 12V1M12 12l8 7"/></svg>
                <svg viewBox="0 0 24 24"><circle class="b" cx="12" cy="12" r="11.500"/><circle class="w" cx="12" cy="12" r="6"/><path class="g" d="M12 1a11 11 0 0 1 11 11h-5a6 6 0 0 0-6-6z"/></svg>

                <svg viewBox="0 0 24 24"><path d="M1 1h23v23H1z"/><path class="b" d="M1 1h12v12H1zM1 14h12v10H1z"/><path d="M13 1v23M13 8h11M13 15h11M18 8v16M1 13h12"/></svg>
                <svg viewBox="0 0 24 24"><circle cx="12" cy="10" r="9" stroke="#555"/><path class="gr" d="M6 4l6-1 1 5-4 4 2 5-3 1-3-8zM15 7l4 2 1 5-5 2z"/><path class="b" d="M12 1c3 2 5 5 5 9s-2 7-5 9c-2-3-3-6-3-9s1-6 3-9z" opacity=".35"/><path d="M7 23h10M12 19v4"/></svg>
                <svg viewBox="0 0 24 24"><path class="g" d="M3 2l9 2 3 9-4 8-5-3-4-8z"/><path class="b" d="M12 4l10-2 1 9-6 3-2 6-4 1 4-8z"/><path d="M1 3l5 2 6-2 5 2 6-3v12l-6 6-5 3-3-3-5-1-3-9z"/></svg>
                <svg viewBox="0 0 24 24"><path class="b" d="M13 0l7 24-7-5-9 3z" /><path class="db" d="M13 0l7 24-7-5z"/></svg>
                <svg viewBox="0 0 24 24"><path d="M1 19C2 9 8 5 12 5s10 4 11 14h-6M7 19H1" stroke="#555" stroke-width="2"/><path class="b" d="M3 17C4 11 8 8 12 8l-1 4-3 5z"/><path d="M10 20l5-8" stroke="#333" stroke-width="2.400"/></svg>
                <svg viewBox="0 0 24 24"><path d="M1 4h23v17H1z"/><path d="M1 4h23v3H1z" stroke="#555"/><text x="12.500" y="16.500" class="n123">123</text></svg>

                <svg viewBox="0 0 24 24"><path d="M1 1h23v23H1z"/><path class="b" d="M5 6h15v2.500H5zM5 11h10v2.500H5zM5 16h7v2.500H5z"/></svg>
                <svg viewBox="0 0 24 24"><path d="M1 3h23v19H1z"/><path class="gr" d="M8 6l5 9H3z"/><path class="r" d="M14 7h8l-4 8z"/></svg>
                <svg viewBox="0 0 24 24"><path d="M1 1h23v15h-8l-4 4v3H1z"/><path d="M1 1h23v4H1z" stroke="#555"/><rect class="g" x="5" y="9" width="5" height="4"/><rect class="g" x="5" y="15" width="5" height="4"/><path class="w" stroke="#444" d="M12 13h12l-5 6v5l-3-2v-3z"/></svg>
                <svg viewBox="0 0 24 24"><path d="M1 1h23v23H1zM1 6h23M9 6v18M17 6v18M1 12h23M1 18h23"/><path class="g" d="M1 1h23v4H1z"/></svg>
                <svg viewBox="0 0 24 24"><path d="M1 1h23v23H1z"/><path class="g" d="M1 1h23v4H1z"/><path class="b" d="M1 6h7v5H1zM10 6h6v5h-6zM10 13h14v5H10zM1 19h7v5H1z"/><path d="M1 12h23M1 18h23M9 6v18M17 6v18"/></svg>
                <svg viewBox="0 0 24 24"><text x="11" y="19" class="letter-r">R</text></svg>

                <svg viewBox="0 0 24 24"><text x="0" y="18" class="letter-py">Py</text></svg>
                <svg viewBox="0 0 24 24"><path d="M1 1v22h23M1 7h14M1 13h8M1 19h12"/><circle class="b" cx="19" cy="5" r="2.500"/><circle class="b" cx="13" cy="13" r="2.500"/></svg>
                <svg viewBox="0 0 24 24"><path class="b" d="M1 10h8v5H1zM14 2h9v6h-9zM14 10h9v5h-9zM14 17h9v6h-9z"/><path d="M9 12h5M12 5v15M12 5h2M12 20h2M16 2v21" stroke="#444"/></svg>
                <svg viewBox="0 0 24 24"><path d="M1 2h23v16H11l-5 5v-5H1z" stroke="#2b79b5" stroke-width="1.300"/></svg>
                <svg viewBox="0 0 24 24"><path d="M4 1h13l5 5v18H4zM17 1v5h5"/><circle class="b" cx="4" cy="8" r="2"/><path d="M9 10h7M9 15h9" stroke="#2b79b5"/><path d="M4 15h3" stroke="#2b79b5"/></svg>
                <svg viewBox="0 0 24 24"><path d="M6 1h12v9c0 3-3 6-6 6s-6-3-6-6zM6 4H1c0 5 2 8 6 8M18 4h5c0 5-2 8-6 8M12 16v4M7 23h10"/><path class="b" d="M6 20h12v4H6z"/></svg>

                <svg viewBox="0 0 24 24"><path d="M3 1h13l5 5v18H3zM16 1v5h5"/><path class="x" d="M7 16h3v5H7zM11 13h3v8h-3zM15 18h3v3h-3z"/></svg>
                <svg viewBox="0 0 24 24"><path d="M2 6h22v16H2z"/><text x="14" y="19" class="n123">123</text><path class="y" d="M5 0h7L8 6h3L3 16l2-7H1z"/></svg>
                <svg viewBox="0 0 24 24"><path class="g" d="M5 5h8v8H5z"/><path d="M1 3h15v18H1z" stroke="#999"/><path class="w" stroke="#444" d="M10 11h14l-6 6v7l-3-2v-5z"/><path class="y" d="M5 0h7L8 5h3L3 14l2-6H1z"/></svg>
                <svg viewBox="0 0 24 24"><path d="M3 3h20v17H3z"/><path class="b" d="M10 4h12v7l-5 3 1 5H10l-3-7z"/><path class="o" d="M1 0h7v6l-3.500 6L1 6z"/><circle class="o" cx="21" cy="20" r="3.500"/></svg>
                <svg viewBox="0 0 24 24"><path class="pu" d="M12 1l11 11-11 11L1 12zM8 12l4-4 4 4-4 4z"/><path class="pu" d="M6 7l11 10M18 7L7 17"/></svg>
                <svg viewBox="0 0 24 24"><path class="bl" d="M1 3h13l9 9-9 9H1l9-9zM8 21L21 3M13 21L23 8"/></svg>
            </div>
            <div class="viz-more">···</div>
            <div class="wells">
                <div class="w-label">X-axis</div>
                <div class="zone z-x">
                    <div class="chip"><span>Accidents based on vi...</span><svg viewBox="0 0 30 12"><path d="M0 1l6 6 6-6M21 0l9 9M30 0l-9 9"/></svg></div>
                    <div class="chip"><span>Visibility(mi)</span><svg viewBox="0 0 30 12"><path d="M0 1l6 6 6-6M21 0l9 9M30 0l-9 9"/></svg></div>
                </div>
                <div class="w-label">Y-axis</div>
                <div class="zone z-y">
                    <div class="chip"><span>Count of ID</span><svg viewBox="0 0 30 12"><path d="M0 1l6 6 6-6M21 0l9 9M30 0l-9 9"/></svg></div>
                </div>
                <div class="w-label">Legend</div>
                <div class="zone z-add">Add data fields here</div>
                <div class="w-label">Small multiples</div>
                <div class="zone z-add">Add data fields here</div>
                <div class="w-label">Tooltips</div>
                <div class="zone z-add">Add data fields here</div>
                <div class="well-scroll"></div>
            </div>
        </div>

        <!-- data pane -->
        <div class="data">
            <div class="pane-head">
                <span class="p-title">Data</span>
                <svg class="dbl" viewBox="0 0 16 16"><path d="M2 1l7 7-7 7M8 1l7 7-7 7"/></svg>
            </div>
            <div class="d-search">
                <svg viewBox="0 0 20 20"><circle cx="8" cy="8" r="6.500"/><path d="M12.500 12.500L19 19"/></svg>
                <span>Search</span>
            </div>
            <div class="tree">
                <div class="t-root">
                    <svg class="t-exp" viewBox="0 0 14 14"><path d="M0 3l7 7 7-7"/></svg>
                    <span class="t-tbl"><svg viewBox="0 0 16 16"><path d="M1 2h14v12H1zM1 6h14M1 10h14M6 2v12M11 2v12"/></svg><i class="t-ok"></i></span>
                    <span class="t-name">US_Accidents_March23</span>
                </div>
                <div class="t-row"><i class="cb on"></i><svg class="t-ico" viewBox="0 0 16 16"><path d="M4 1H2a1 1 0 0 0-1 1v3M12 1h2a1 1 0 0 1 1 1v3M4 15H2a1 1 0 0 1-1-1v-3M12 15h2a1 1 0 0 0 1-1v-3"/><circle cx="8" cy="8" r="3.500"/><path d="M4.500 8h7M8 4.500v7"/></svg><span>Accidents base...</span></div>
                <div class="t-row"><i class="cb"></i><span class="t-noico"></span><span>City</span></div>
                <div class="t-row"><i class="cb on"></i><span class="t-noico"></span><span>ID</span></div>
                <div class="t-row"><i class="cb"></i><svg class="t-ico" viewBox="0 0 16 16"><path d="M14 3V1H2l6 7-6 7h12v-2"/></svg><span>Start_Lat</span></div>
                <div class="t-row"><i class="cb"></i><svg class="t-ico" viewBox="0 0 16 16"><path d="M14 3V1H2l6 7-6 7h12v-2"/></svg><span>Start_Lng</span></div>
                <div class="t-row"><svg class="t-more" viewBox="0 0 10 14"><path d="M1 1l7 6-7 6"/></svg><i class="cb"></i><svg class="t-ico" viewBox="0 0 16 16"><rect x="1" y="1" width="14" height="14" rx="2"/><path d="M1 5h14M4 8h2M7 8h2M10 8h2M4 11h2M7 11h2M10 11h2"/></svg><span>Start_Time</span></div>
                <div class="t-row"><i class="cb on"></i><svg class="t-ico" viewBox="0 0 16 16"><path d="M14 3V1H2l6 7-6 7h12v-2"/></svg><span>Visibility(mi)</span></div>
                <div class="t-row"><i class="cb"></i><span class="t-noico"></span><span>Weather_Condi...</span></div>
            </div>
        </div>
    </div>
    <div class="status"><span class="st-mark"></span></div>
</div>
<script src="map.js"></script>
</body>
</html>
```

FILE: styles.css
```css
* {
    box-sizing: border-box;
}

html, body {
    margin: 0;
    height: 100%;
    overflow: hidden;
}

body {
    font-family: Roboto, "Liberation Sans", sans-serif;
    color: #252423;
    background: #f3f2f1;
}

.app {
    display: flex;
    flex-direction: column;
    height: 100vh;
}

/* title bar */
.titlebar {
    height: 31px;
    flex: none;
    display: flex;
    align-items: center;
    background: #3b3a39;
    color: #fff;
    font-size: 14px;
    position: relative;
    overflow: hidden;
}

.tb-ico {
    width: 18px;
    height: 20px;
    fill: none;
    stroke: #e6e6e6;
    stroke-width: 1.2;
    flex: none;
}

.tb-save { margin: 0 0 8px 18px; }
.tb-undo { margin: 0 0 8px 22px; }
.tb-redo { margin: 0 0 8px 16px; stroke: #777; }

.tb-file {
    margin: 0 0 6px 16px;
    width: 296px;
    white-space: nowrap;
    font-size: 14px;
}

.tb-caret {
    width: 0;
    height: 0;
    margin: 0 0 8px 6px;
    border-left: 5px solid transparent;
    border-right: 5px solid transparent;
    border-top: 5px solid #fff;
}

.tb-search {
    margin-left: 374px;
    width: 500px;
    height: 24px;
    align-self: flex-start;
    background: #d6d6d6;
    border-radius: 0 0 3px 3px;
    display: flex;
    align-items: center;
    padding: 0 0 4px 20px;
    color: #2f5f5a;
    font-size: 16px;
}

.tb-search svg {
    width: 20px;
    height: 20px;
    fill: none;
    stroke: #333;
    stroke-width: 1.2;
    margin-right: 14px;
}

.tb-sign {
    margin: 0 0 6px 339px;
    width: 57px;
    font-size: 15px;
}

.tb-avatar {
    width: 26px;
    height: 26px;
    margin: 0 0 8px 3px;
}

.tb-win {
    width: 14px;
    height: 14px;
    fill: none;
    stroke: #fff;
    stroke-width: 1.2;
    margin-bottom: 8px;
}

.tb-min { margin-left: 39px; }
.tb-res { margin-left: 40px; }
.tb-close { margin-left: 42px; }

/* tabs */
.tabs {
    height: 38px;
    flex: none;
    background: #fafafa;
    display: flex;
    align-items: stretch;
    padding-left: 26px;
    font-size: 17px;
    letter-spacing: .2px;
    position: relative;
}

.tab {
    display: flex;
    align-items: center;
    margin-right: 39px;
    position: relative;
}

.tab-file {
    margin-right: 47px;
}

.tab.active {
    font-weight: 500;
}

.tab.active::after {
    content: "";
    position: absolute;
    left: 0;
    right: 0;
    bottom: 0;
    height: 3px;
    background: #117865;
}

.tab.ctx {
    color: #117865;
    font-weight: 500;
    background: #fff;
    margin-right: 4px;
}

.tab.ctx:nth-child(8) {
    padding-right: 18px;
}

.tab.ctx:nth-child(9) {
    padding: 0 18px 0 22px;
}

.share {
    position: absolute;
    right: 0;
    top: 5px;
    width: 101px;
    height: 30px;
    border: 0;
    border-radius: 5px 0 0 5px;
    background: #117865;
    color: #fff;
    font: 15px Roboto, sans-serif;
    display: flex;
    align-items: center;
    padding-left: 9px;
}

.share svg {
    width: 20px;
    height: 20px;
    fill: none;
    stroke: #fff;
    stroke-width: 1.1;
    margin-right: 9px;
}

.share .share-chev {
    width: 12px;
    height: 12px;
    margin: 0 0 0 5px;
}

/* ribbon */
.ribbon {
    height: 119px;
    flex: none;
    display: flex;
    background: #fafafa;
    position: relative;
    box-shadow: 0 1px 3px rgba(0, 0, 0, .25);
    z-index: 2;
    font-size: 14.500px;
}

.rgroup {
    display: flex;
    flex-direction: column;
    height: 110px;
    margin-top: 7px;
    border-right: 1px solid #d6d6d6;
}

.g-clip { width: 198px; padding-left: 10px; }
.g-data { width: 448px; padding-left: 5px; }
.g-query { width: 145px; padding-left: 8px; }
.g-insert { width: 184px; padding-left: 11px; }
.g-calc { width: 232px; padding-left: 10px; }
.g-sens { width: 93px; padding-left: 7px; }
.g-share { width: 73px; padding-left: 6px; }
.g-copilot { width: 73px; padding-left: 6px; }

.rbtns {
    display: flex;
    flex: 1;
}

.rbtn {
    display: flex;
    flex-direction: column;
    align-items: center;
    text-align: center;
    line-height: 20px;
    padding-top: 6px;
    white-space: nowrap;
}

.rbtn span {
    margin-top: 5px;
}

.ric {
    width: 38px;
    height: 38px;
    flex: none;
}

.w48 { width: 48px; }
.w50 { width: 50px; }
.w55 { width: 55px; }
.w58 { width: 58px; }
.w60 { width: 60px; }
.w64 { width: 64px; }
.w65 { width: 65px; }
.w70 { width: 70px; }
.w76 { width: 76px; }
.w80 { width: 80px; }
.w92 { width: 92px; }

.dim {
    color: #bdbdbd;
}

.paste { width: 44px; }

.clip-col {
    margin-left: 8px;
}

.clip-row {
    height: 30px;
    display: flex;
    align-items: center;
    white-space: nowrap;
}

.clip-row svg {
    width: 18px;
    height: 18px;
    margin-right: 6px;
}

.chev {
    display: inline-block;
    width: 5px;
    height: 5px;
    margin: 0 2px 3px 5px;
    border-right: 1.300px solid #444;
    border-bottom: 1.300px solid #444;
    transform: rotate(45deg);
}

.dim .chev {
    border-color: #bbb;
}

.rlabel {
    text-align: center;
    font-size: 12.500px;
    color: #444;
    height: 14px;
    line-height: 14px;
    margin-bottom: -1px;
    padding-right: 4px;
}

.g-clip .rlabel { padding-right: 10px; }

.rib-collapse {
    position: absolute;
    right: 0;
    top: 104px;
    width: 10px;
    height: 10px;
    fill: none;
    stroke: #333;
    stroke-width: 1.300;
}

.xl {
    font: 700 15px "Liberation Sans", sans-serif;
    fill: #fff;
    text-anchor: middle;
}

.ta {
    font: 22px Roboto, sans-serif;
    fill: #2b88d8;
    text-anchor: middle;
}

.fx {
    font: italic 17px "Liberation Serif", serif;
    fill: #333;
}

/* main */
.main {
    flex: 1;
    display: flex;
    min-height: 0;
}

.rail {
    width: 48px;
    flex: none;
    background: #f3f2f1;
    border-right: 1px solid #e1dfdd;
    display: flex;
    flex-direction: column;
    align-items: center;
    padding: 14px 3px 0 0;
    gap: 29px;
}

.rail svg {
    width: 21px;
    height: 21px;
    fill: none;
    stroke: #333;
    stroke-width: 1.200;
    overflow: visible;
}

.dax {
    font: 700 7px Roboto, sans-serif;
    fill: #444;
    stroke: none;
}

.center {
    width: 1417px;
    flex: none;
    display: flex;
    flex-direction: column;
}

.center-top {
    height: 806px;
    flex: none;
    display: flex;
}

.canvas {
    width: 1166px;
    flex: none;
    background: #fff;
    padding-left: 4px;
}

.report {
    display: grid;
    grid-template-columns: 578px 584px;
    grid-template-rows: 345px 312px;
    border-bottom: 2px dotted #333;
    width: 1162px;
    height: 659px;
}

.visual {
    display: block;
    width: 100%;
    height: 100%;
}

/* chart text */
.v-title {
    font: 700 17.500px Roboto, sans-serif;
}

.pie circle {
    fill: none;
    stroke-width: 111;
}

.lead path {
    fill: none;
    stroke: #a6a6a6;
    stroke-width: 1;
}

.pl text {
    font-size: 11px;
    fill: #666;
}

.leg-title {
    font: 700 11.500px Roboto, sans-serif;
    fill: #555;
}

.leg text {
    font-size: 11.500px;
    fill: #666;
}

.bar-title {
    font: 700 14.800px Roboto, sans-serif;
    fill: #2b2b2b;
}

.ytick text {
    font-size: 11.500px;
    fill: #666;
    text-anchor: end;
}

.y-name {
    font-size: 13px;
    fill: #444;
}

.xrot text {
    font-size: 11px;
    font-weight: 700;
    fill: #666;
}

.xlow text {
    font-size: 12px;
    fill: #555;
}

.x-name {
    font-size: 13px;
    fill: #444;
}

/* map */
.map-visual {
    display: flex;
    flex-direction: column;
    padding-left: 8px;
    background: #fff;
}

.map-title {
    height: 22px;
    line-height: 20px;
    text-align: center;
    font-weight: 700;
    font-size: 14.800px;
    color: #c8374a;
    margin-left: -8px;
}

.map-svg {
    display: block;
    width: 567px;
    height: 283px;
}

.land {
    fill: #f3f3f3;
}

.water {
    fill: #ced1d3;
}

.roads {
    fill: none;
    stroke: #d9dcdd;
    stroke-width: .8;
}

.attr {
    font-size: 10px;
    fill: #666;
}

.map-tools path,
.map-tools circle,
.map-tools rect + path {
    fill: none;
    stroke: #444;
    stroke-width: .9;
}

.map-tools rect:not(:first-child) {
    fill: none;
    stroke: #444;
    stroke-width: .9;
}

/* table visual */
.table-visual {
    position: relative;
    background: #fff;
    overflow: hidden;
}

.table-title {
    height: 22px;
    line-height: 21px;
    background: #e6e6e6;
    padding-left: 234px;
    font-weight: 700;
    font-size: 14.700px;
    color: #33093f;
}

.vis-head {
    position: absolute;
    top: 0;
    left: 336px;
    right: 0;
    display: flex;
    height: 32px;
}

.vh-btn {
    width: 31px;
    margin-right: 4px;
    background: #fff;
    display: flex;
    justify-content: center;
    align-items: flex-end;
}

.vh-btn svg {
    width: 20px;
    height: 28px;
    fill: none;
    stroke: #555;
    stroke-width: 1;
}

.vh-btn.off svg {
    stroke: #c2c2c2;
}

.vh-btn:nth-child(4) { margin-right: 15px; }

.dots {
    font-size: 20px;
    letter-spacing: 1px;
    align-items: center;
    padding-top: 6px;
    margin-right: 0;
    color: #444;
}

.tbl {
    margin-left: 6px;
    width: 166px;
    font-size: 12px;
    color: #444;
}

.thead {
    display: flex;
    justify-content: space-between;
    height: 27px;
    padding: 3px 5px 0 4px;
    border-bottom: 1px solid #4a90d0;
}

.th-num {
    position: relative;
}

.sort {
    position: absolute;
    left: 1px;
    top: 15px;
    border-left: 4px solid transparent;
    border-right: 4px solid transparent;
    border-top: 4px solid #222;
}

.tbody {
    height: 238px;
    overflow: hidden;
}

.trow {
    display: flex;
    justify-content: space-between;
    align-items: center;
    height: 19.100px;
    padding: 0 5px;
}

.trow:nth-child(even) {
    background: #eeeeee;
}

.ttotal {
    display: flex;
    justify-content: space-between;
    align-items: center;
    height: 22px;
    padding: 0 5px;
    font-weight: 700;
    border-top: 1px solid #4a90d0;
}

/* filters */
.filters {
    width: 251px;
    flex: none;
    background: #fff;
    border-left: 1px solid #c8c6c4;
    border-right: 1px solid #e1dfdd;
    padding: 0 9px 0 10px;
    font-size: 14.500px;
}

.pane-head {
    height: 50px;
    display: flex;
    align-items: center;
    position: relative;
}

.f-funnel {
    width: 20px;
    height: 20px;
    margin: 0 11px 0 5px;
    fill: none;
    stroke: #252423;
    stroke-width: 1.600;
}

.f-title {
    font-size: 19px;
    font-weight: 500;
}

.f-eye {
    position: absolute;
    left: 176px;
    top: 18px;
    width: 16px;
    height: 11px;
    fill: none;
    stroke: #333;
    stroke-width: 1.500;
}

.dbl {
    position: absolute;
    width: 14px;
    height: 14px;
    fill: none;
    stroke: #333;
    stroke-width: 1.300;
    right: 10px;
    top: 17px;
}

.filters .dbl {
    right: 3px;
}

.f-search {
    height: 38px;
    margin-top: 7px;
    width: 225px;
    border: 1px solid #a6a6a6;
    border-radius: 2px;
    display: flex;
    align-items: center;
    padding-left: 12px;
    color: #333;
    font-size: 16px;
}

.f-search svg {
    width: 18px;
    height: 18px;
    fill: none;
    stroke: #444;
    margin-right: 19px;
}

.f-sep {
    height: 1px;
    background: #bdbdbd;
    margin: 5px -9px 0 -10px;
}

.f-sec {
    display: flex;
    justify-content: space-between;
    height: 20px;
    line-height: 20px;
    margin: 33px 0 11px;
    color: #333;
}

.f-sec.first {
    margin-top: 22px;
    margin-bottom: 10px;
}

.f-sec b {
    font-weight: 400;
    margin-right: 5px;
    letter-spacing: 1px;
}

.f-card {
    height: 57px;
    border: 1px solid #c8c6c4;
    border-radius: 2px;
    margin-bottom: 8px;
    padding: 5px 10px;
    display: flex;
    flex-direction: column;
    justify-content: center;
    line-height: 22px;
}

.f-card.add {
    align-items: center;
    margin-bottom: 0;
    color: #333;
}

/* visualizations */
.viz {
    width: 227px;
    flex: none;
    border-right: 1px solid #dcdad8;
    background: #f3f2f1;
    position: relative;
}

.p-title {
    font-size: 19.500px;
    font-weight: 500;
    margin-left: 11px;
    color: #252423;
}

.build-label {
    height: 18px;
    line-height: 18px;
    font-size: 14px;
    font-weight: 500;
    margin: -1px 0 0 11px;
}

.build-tabs {
    display: flex;
    justify-content: space-between;
    padding: 5px 9px 0 11px;
    height: 45px;
}

.bt {
    width: 40px;
    height: 40px;
    display: flex;
    align-items: center;
    justify-content: center;
}

.bt.on {
    background: #d2d0ce;
    border-radius: 2px;
}

.bt svg {
    width: 32px;
    height: 32px;
}

.build-sep {
    height: 1px;
    background: #a6a6a6;
    margin-top: 11px;
    position: relative;
}

.build-sep::after {
    content: "";
    position: absolute;
    left: 24px;
    top: -6px;
    width: 11px;
    height: 11px;
    background: #f3f2f1;
    border-left: 1px solid #a6a6a6;
    border-top: 1px solid #a6a6a6;
    transform: rotate(45deg);
}

.viz-grid {
    display: grid;
    grid-template-columns: repeat(6, 35px);
    grid-auto-rows: 35px;
    padding: 12px 0 0 8px;
    justify-items: center;
    align-items: center;
}

.viz-grid > svg,
.cell-on svg {
    width: 24px;
    height: 24px;
    fill: none;
    stroke: #444;
    stroke-width: 1;
}

.cell-on {
    width: 30px;
    height: 30px;
    border: 1px solid #333;
    display: flex;
    align-items: center;
    justify-content: center;
}

.viz-grid .b { fill: #4f9fdc; stroke: none; }
.viz-grid .g { fill: #b3b3b3; stroke: none; }
.viz-grid .k { fill: none; stroke: #444; }
.viz-grid .w { fill: #fff; stroke: none; }
.viz-grid .o { fill: #d9822b; stroke: none; }
.viz-grid .x { fill: #333; stroke: none; }
.viz-grid .gr { fill: #3f9a52; stroke: none; }
.viz-grid .r { fill: #d64550; stroke: none; }
.viz-grid .y { fill: #f7b63c; stroke: #c9781a; stroke-width: .6; }
.viz-grid .db { fill: #1f6fb0; stroke: none; }
.viz-grid .pu { fill: none; stroke: #8a3fa8; stroke-width: 1.300; }
.viz-grid .bl { fill: none; stroke: #2b88d8; stroke-width: 1.300; }

.n123 {
    font: 11px Roboto, sans-serif;
    fill: #3d85bd;
    stroke: none;
    text-anchor: middle;
}

.letter-r {
    font: 700 18px Roboto, sans-serif;
    fill: #2b79b5;
    stroke: none;
    text-anchor: middle;
}

.letter-py {
    font: 700 20px Roboto, sans-serif;
    fill: #2b79b5;
    stroke: none;
}

.viz-more {
    height: 16px;
    line-height: 16px;
    margin: 7px 0 0 16px;
    font-size: 18px;
    letter-spacing: 2px;
    color: #333;
}

.wells {
    margin-top: 17px;
    border-top: 1px solid #e1dfdd;
    position: relative;
    height: 419px;
    overflow: hidden;
    padding: 0 8px 0 7px;
    font-size: 14.500px;
}

.w-label {
    height: 20px;
    line-height: 20px;
    margin: 14px 0 7px 9px;
    color: #333;
}

.w-label:first-child {
    margin-top: 12px;
    margin-bottom: 6px;
}

.zone {
    border: 1px dashed #c8c6c4;
    background: #fff;
    width: 211px;
    padding: 4px 3px;
}

.z-x { height: 75px; }

.z-y {
    height: 43px;
    padding-top: 2px;
}

.z-add {
    height: 34px;
    line-height: 24px;
    padding-left: 13px;
    color: #333;
}

.chip {
    height: 28px;
    margin-bottom: 2px;
    background: #edebe9;
    border: 1px solid #c8c6c4;
    border-radius: 2px;
    display: flex;
    align-items: center;
    justify-content: space-between;
    padding: 0 4px 0 5px;
}

.chip svg {
    width: 30px;
    height: 12px;
    fill: none;
    stroke: #444;
}

.well-scroll {
    position: absolute;
    right: 0;
    top: 3px;
    width: 6px;
    height: 303px;
    background: #8a8a8a;
    border-radius: 3px;
}

/* data pane */
.data {
    flex: 1;
    min-width: 0;
    overflow: hidden;
    position: relative;
    background: #f3f2f1;
    font-size: 14.500px;
}

.data .dbl {
    right: 1px;
}

.d-search {
    height: 28px;
    margin: 10px 0 0 6px;
    background: #fff;
    border: 1px solid #c8c6c4;
    border-bottom: 1px solid #888;
    border-right: 0;
    border-radius: 3px 0 0 3px;
    display: flex;
    align-items: center;
    padding-left: 15px;
    color: #666;
    font-size: 16px;
}

.d-search svg {
    width: 16px;
    height: 16px;
    fill: none;
    stroke: #444;
    margin-right: 10px;
}

.tree {
    padding-top: 11px;
}

.t-root {
    height: 30px;
    display: flex;
    align-items: center;
    padding-left: 17px;
    white-space: nowrap;
}

.t-exp {
    width: 13px;
    height: 13px;
    fill: none;
    stroke: #444;
    margin-right: 7px;
}

.t-tbl {
    position: relative;
    width: 16px;
    height: 16px;
    margin-right: 6px;
    flex: none;
}

.t-tbl svg {
    width: 16px;
    height: 16px;
    fill: none;
    stroke: #444;
    display: block;
}

.t-ok {
    position: absolute;
    left: 7px;
    top: 9px;
    width: 15px;
    height: 15px;
    border-radius: 50%;
    background: #117865;
}

.t-ok::after,
.cb.on::after {
    content: "";
    position: absolute;
    left: 4px;
    top: 3px;
    width: 7px;
    height: 4px;
    border-left: 1.500px solid #fff;
    border-bottom: 1.500px solid #fff;
    transform: rotate(-45deg);
}

.t-name {
    margin-left: -1px;
}

.t-row {
    height: 30px;
    display: flex;
    align-items: center;
    padding-left: 55px;
    white-space: nowrap;
    position: relative;
}

.cb {
    width: 15px;
    height: 15px;
    border: 1px solid #8a8886;
    border-radius: 2px;
    background: #f3f2f1;
    margin-right: 10px;
    flex: none;
    position: relative;
}

.cb.on {
    background: #117865;
    border-color: #117865;
}

.cb.on::after {
    left: 3px;
    top: 2px;
}

.t-ico {
    width: 15px;
    height: 15px;
    margin-right: 7px;
    fill: none;
    stroke: #333;
    flex: none;
}

.t-noico {
    width: 22px;
    flex: none;
}

.t-more {
    position: absolute;
    left: 39px;
    width: 8px;
    height: 12px;
    fill: none;
    stroke: #555;
}

/* page tabs */
.pagebar {
    height: 44px;
    flex: none;
    display: flex;
    align-items: stretch;
    background: #f3f2f1;
    position: relative;
}

.pb-view {
    width: 30px;
    margin-left: 13px;
    display: flex;
    justify-content: center;
    padding-top: 9px;
    position: relative;
}

.pb-view svg {
    width: 24px;
    height: 20px;
    fill: none;
    stroke: #555;
    stroke-width: 1.200;
}

.pb-view.on::after {
    content: "";
    position: absolute;
    left: 0;
    right: 0;
    bottom: 5px;
    height: 3px;
    border-radius: 2px;
    background: #117865;
}

.pb-view.phone {
    margin-left: 25px;
    padding-top: 6px;
}

.pb-view.phone svg {
    width: 16px;
    height: 26px;
}

.pb-arrow {
    align-self: center;
    width: 0;
    height: 0;
    border-top: 5px solid transparent;
    border-bottom: 5px solid transparent;
    margin-bottom: 2px;
}

.pb-arrow.left {
    border-right: 6px solid #c8c6c4;
    margin-left: 20px;
}

.pb-arrow.right {
    border-left: 6px solid #c8c6c4;
    margin-left: 22px;
}

.page-tab {
    width: 96px;
    background: #fff;
    border-left: 1px solid #b5b5b5;
    display: flex;
    align-items: center;
    justify-content: center;
    font-size: 14.500px;
    padding-bottom: 3px;
}

.page-tab.on {
    width: 93px;
    margin-left: 8px;
    font-weight: 500;
    border-bottom: 5px solid #117865;
    padding-bottom: 0;
}

.page-add {
    width: 50px;
    background: #117865;
    color: #fff;
    font-size: 26px;
    font-weight: 700;
    display: flex;
    align-items: center;
    justify-content: center;
    padding-bottom: 4px;
}

.status {
    height: 10px;
    flex: none;
    background: #f3f2f1;
    border-top: 1px solid #e1dfdd;
    position: relative;
}

.st-mark {
    position: absolute;
    left: 1634px;
    top: 8px;
    width: 20px;
    height: 2px;
    background: #555;
}
```

FILE: map.js
```js
// accident bubbles over the map
const SVG_NS = 'http://www.w3.org/2000/svg';
const layer = document.getElementById('bubbles');

// outline of the mainland, in map coordinates
const usa = [[199,615],[365,627],[407,647],[434,653],[486,648],[484,670],[453,707],[427,737],[438,763],[427,780],[407,760],[384,750],[346,753],[335,767],[308,740],[266,740],[231,733],[208,710],[193,690],[197,637]];

// big cities: x, y, radius
const cities = [[208,627,13],[203,647,8],[203,700,17],[227,727,13],[235,730,9],[268,733,9],[261,662,5],[283,639,6],[262,675,8],[250,703,5],[258,720,8],[337,712,10],[346,705,7],[332,722,5],[352,688,9],[348,747,10],[333,747,6],[375,747,11],[390,747,7],[365,743,9],[423,763,20],[407,760,9],[428,777,9],[407,658,16],[436,660,10],[472,667,14],[457,690,10],[449,705,7],[426,723,14],[404,710,9]];

// dense areas, where dots pile up: x, y, spread, count
const clusters = [[205,695,13,120],[225,722,12,80],[205,640,10,70],[423,758,11,120],[470,668,14,120],[450,695,15,110],[425,720,17,120],[345,745,20,50],[375,745,16,50]];

let seed = 4242;
function rnd() {
    seed = (seed * 16807) % 2147483647;
    return seed / 2147483647;
}

function inside(x, y) {
    let hit = false;
    for (let i = 0, j = usa.length - 1; i < usa.length; j = i++) {
        const [xi, yi] = usa[i];
        const [xj, yj] = usa[j];
        if ((yi > y) !== (yj > y) && x < (xj - xi) * (y - yi) / (yj - yi) + xi) hit = !hit;
    }
    return hit;
}

function dot(x, y, r, fill, stroke) {
    const c = document.createElementNS(SVG_NS, 'circle');
    c.setAttribute('cx', x.toFixed(1));
    c.setAttribute('cy', y.toFixed(1));
    c.setAttribute('r', r.toFixed(1));
    c.setAttribute('fill', fill);
    if (stroke) {
        c.setAttribute('stroke', stroke);
        c.setAttribute('stroke-width', '.5');
    }
    layer.appendChild(c);
}

const ORANGE = '#f59c2a';

// each city is an orange disc with a white one pushed inland, which leaves a crescent
cities.forEach(([x, y, r]) => {
    const dx = 340 - x;
    const dy = 690 - y;
    const len = Math.hypot(dx, dy) || 1;
    dot(x, y, r, ORANGE, '#fff');
    dot(x + dx / len * r * .16, y + dy / len * r * .16, r * .8, '#fff');
    if (r <= 9) {
        dot(x, y, r * .55, ORANGE);
        dot(x, y, r * .32, '#fff');
    }
});

clusters.forEach(([cx, cy, spread, count]) => {
    for (let i = 0; i < count; i++) {
        const a = rnd() * Math.PI * 2;
        const d = rnd() * spread;
        const x = cx + Math.cos(a) * d;
        const y = cy + Math.sin(a) * d;
        if (inside(x, y)) dot(x, y, 1 + rnd() * 1.4, '#fff', '#fff');
    }
});

// scatter over the whole country, heavier to the east, drawn last so orange stays on top
let placed = 0;
while (placed < 1500) {
    const x = 193 + rnd() * 295;
    const y = 615 + rnd() * 165;
    if (!inside(x, y)) continue;
    if (x > 228 && x < 340 && rnd() < .72) continue;
    dot(x, y, .8 + rnd() * .9, ORANGE, '#fff');
    placed++;
}
```
